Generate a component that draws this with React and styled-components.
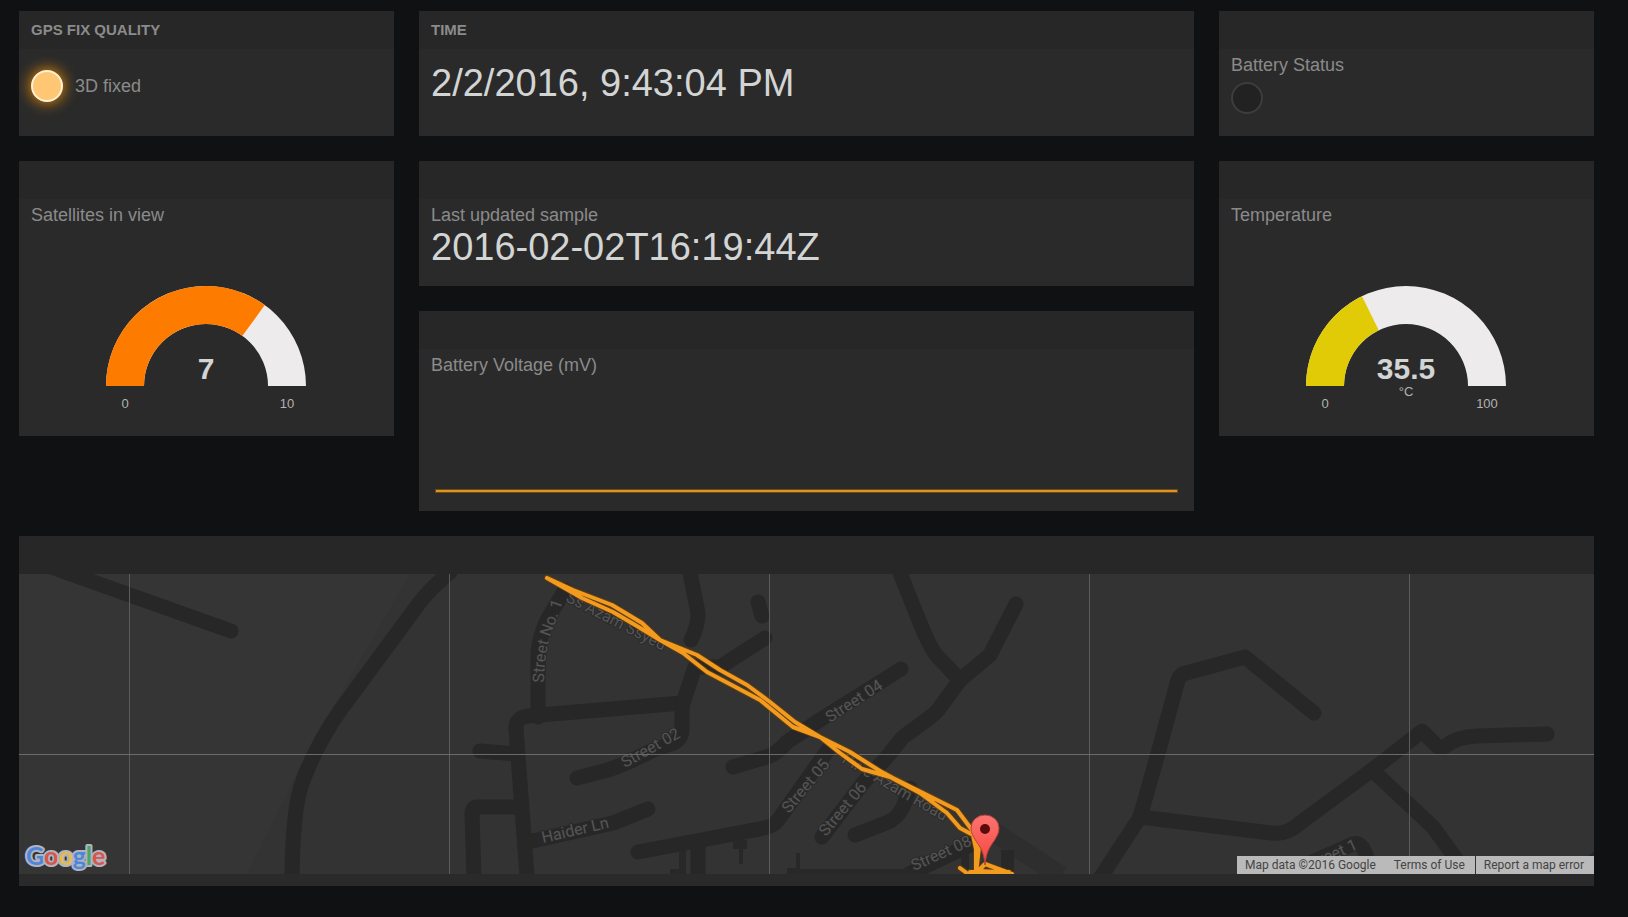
import React from "react";
import styled, { createGlobalStyle } from "styled-components";

const GlobalStyle = createGlobalStyle`
  * { box-sizing: border-box; }
  body {
    margin: 0;
    background: #101113;
    color: #8b8b8b;
    font-family: "Liberation Sans", Arial, sans-serif;
    font-size: 18px;
  }
`;

const Board = styled.main`
  display: grid;
  grid-template-columns: repeat(4, minmax(0, 1fr));
  gap: 25px;
  padding: 11px 34px 31px 19px;
`;

const Column = styled.div`
  grid-column: span ${(p) => p.$span || 1};
  display: flex;
  flex-direction: column;
  gap: 25px;
`;

const Panel = styled.section`
  display: flex;
  flex-direction: column;
  min-height: ${(p) => p.$height}px;
  background: #2a2a2a;
`;

const PanelHeader = styled.header`
  height: 38px;
  padding: 0 12px;
  background: #272727;
`;

const PanelTitle = styled.h2`
  margin: 0;
  font-size: 15px;
  line-height: 38px;
  font-weight: bold;
  text-transform: uppercase;
`;

const PanelBody = styled.div`
  flex: 1;
  display: flex;
  flex-direction: column;
  padding: ${(p) => (p.$titled ? 14 : 4)}px 12px 0;
`;

const WidgetLabel = styled.h3`
  margin: 0;
  font-size: 18px;
  line-height: 24px;
  font-weight: normal;
`;

const BigValue = styled.div`
  color: #d3d4d4;
  font-size: 38px;
  line-height: 40px;
  white-space: nowrap;
`;

const IndicatorRow = styled.div`
  display: flex;
  align-items: center;
  gap: 12px;
  height: ${(p) => (p.$tall ? 46 : 42)}px;
`;

const Light = styled.span`
  width: 32px;
  height: 32px;
  border-radius: 50%;
  border: 2px solid ${(p) => (p.$on ? "#fdf1d8" : "#3d3d3d")};
  background: ${(p) => (p.$on ? "#ffc773" : "#222")};
  box-shadow: ${(p) => (p.$on ? "0 0 15px #ff9900" : "none")};
`;

const GaugeSvg = styled.svg`
  display: block;
  align-self: center;
  width: 201px;
  height: 140px;
  margin-top: 59px;
  font-family: "Liberation Sans", Arial, sans-serif;
  text-anchor: middle;
`;

const SparkSvg = styled.svg`
  display: block;
  height: 40px;
  margin: auto 4px 0;
`;

const MapFrame = styled.div`
  position: relative;
  height: 300px;
  margin-bottom: 12px;
  overflow: hidden;
  background: #333;
`;

const MapSvg = styled.svg`
  display: block;
  width: 100%;
  height: 100%;
`;

const Attribution = styled.div`
  position: absolute;
  right: 0;
  bottom: 0;
  display: flex;
  gap: 1px;
  color: #444;
  font-family: Roboto, sans-serif;
  font-size: 12px;
  line-height: 18px;
  white-space: nowrap;
`;

const CreditGroup = styled.span`
  display: flex;
  gap: 18px;
  padding: 0 10px 0 8px;
  background: #bababa;
`;

const CreditLink = styled.a`
  padding: ${(p) => (p.$boxed ? "0 10px 0 8px" : 0)};
  background: #bababa;
  color: inherit;
  text-decoration: none;
`;

function Widget({ title, height, children }) {
  return (
    <Panel $height={height}>
      <PanelHeader>{title && <PanelTitle>{title}</PanelTitle>}</PanelHeader>
      <PanelBody $titled={Boolean(title)}>{children}</PanelBody>
    </Panel>
  );
}

function arc(from, to) {
  const point = (t, r) => {
    const a = Math.PI * (1 - t);
    return `${100 + r * Math.cos(a)} ${100 - r * Math.sin(a)}`;
  };
  return `M${point(from, 100)}A100 100 0 0 1 ${point(to, 100)}L${point(to, 62)}A62 62 0 0 0 ${point(from, 62)}Z`;
}

function Gauge({ label, value, max, unit, color }) {
  return (
    <GaugeSvg viewBox="0 0 201 140" role="img" aria-label={label}>
      <path d={arc(0, 1)} fill="#edebec" />
      <path d={arc(0, value / max)} fill={color} />
      <text x="100" y="93" fontSize="30" fontWeight="bold" fill="#d3d4d4">{value}</text>
      {unit && <text x="100" y="110" fontSize="13" fill="#b3b3b3">{unit}</text>}
      <text x="19" y="122" fontSize="13" fill="#b3b3b3">0</text>
      <text x="181" y="122" fontSize="13" fill="#b3b3b3">{max}</text>
    </GaugeSvg>
  );
}

const ROADS = [
  "M27-9L49-1L212 57",
  "M431-2Q412 14 401 28L334 119Q310 150 296 179Q284 204 281 216Q274 240 273 301",
  "M546 16L528 46Q519 66 519 83L519 143",
  "M663 129L509 142Q496 144 497 155L504 249L508 301",
  "M461 177L498 180",
  "M663 129V155Q663 166 652 170L634 176Q600 194 581 198L558 204",
  "M671-1L679 39Q679 52 672 66M664 129L676 93L701 93L746 64",
  "M739 28L743 42",
  "M882 95L804 144L768 168Q756 182 744 184L714 193",
  "M509 268L594 249L629 235",
  "M498 233H458Q453 233 453 240L455 301",
  "M619 278L745 254Q756 252 762 242L811 173",
  "M679 273V301",
  "M997 30L971 81L941 106L919 136Q915 141 884 163L868 183L844 209L803 263",
  "M881-1L901 49Q912 76 919 83L941 106",
  "M836 261L867 249Q878 245 884 233L891 214",
  "M890 300L951 271",
  "M1295 139L1226 83L1167 99Q1161 100 1159 106L1138 183L1121 243L1078 309",
  "M1121 243L1253 259Q1268 261 1281 249L1353 196L1388 169L1403 157L1418 172Q1423 175 1428 171Q1438 163 1458 162L1528 160",
  "M1353 196L1414 253L1450 303",
  "M1560 298L1590 276",
];

const TRACK_A =
  "M528 4L554 16L593 31L623 49L641 66L678 81L701 96L728 111L751 128L776 148L801 163L831 178L861 197L874 204L938 236L953 256L960 273L957 300";
const TRACK_B =
  "M528 4L563 24L594 38L618 52L641 66L664 79L688 98L741 126L774 153L801 163L821 179L843 195L871 203L901 219L928 239L941 254L954 261L957 275V300M941 294L949 300M951 298H990M952 304L966 290L993 300M966 290L960 297L980 298";

const STREETS = [
  ["Street 02", 606, 194, -29],
  ["Haider Ln", 524, 269, -13],
  ["Street 04", 811, 149, -33],
  ["Street 05", 770, 240, -50],
  ["Street 06", 807, 263, -50],
  ["Street 08", 895, 297, -24],
  ["Street 1", 1289, 297, -24],
  ["Ss Azam Ssyed", 546, 27, 27],
  ["Pir-e-Azam Road", 822, 188, 30],
];

const LOGO = [
  ["G", "#4f86d9"],
  ["o", "#d9554c"],
  ["o", "#e3ba4c"],
  ["g", "#4f86d9"],
  ["l", "#4ea56a"],
  ["e", "#d9554c"],
];

function RoadMap() {
  return (
    <MapSvg viewBox="0 0 1575 300" preserveAspectRatio="xMidYMid slice" role="img" aria-label="Map of the recorded track">
      <defs>
        <path id="street-one" d="M525 109Q525 80 533 58L545 24" />
        <linearGradient id="pin" x1="0" y1="0" x2="0" y2="1">
          <stop offset="0" stopColor="#fb7570" />
          <stop offset="1" stopColor="#f8433d" />
        </linearGradient>
      </defs>
      <path d="M0 0H391L291 173L228 300H0Z" fill="#353535" />
      <path d="M972 256L1042 302" stroke="#2e2e2e" strokeWidth="20" />
      <g fill="none" stroke="#272727" strokeWidth="15" strokeLinecap="round" strokeLinejoin="round">
        {ROADS.map((d) => <path key={d} d={d} />)}
      </g>
      <path
        d="M1284 292L1334 270Q1343 267 1348 284"
        fill="none" stroke="#272727" strokeWidth="15" strokeLinecap="round"
      />
      <path
        d="M660 276H667V300H651V295H660ZM714 266H728V275H724V290H720V275H714ZM768 295H900V300H768ZM777 279H781V296H777ZM768 294H778V290H781V300H768ZM982 276H995V300H982ZM942 276H950V300H942Z"
        fill="#282828"
      />
      <g fill="#555" stroke="#2a2a2a" strokeWidth="2" paintOrder="stroke" fontFamily="Roboto, sans-serif" fontSize="16">
        <text><textPath href="#street-one">Street No. 1</textPath></text>
        {STREETS.map(([name, x, y, angle]) => (
          <text key={name} transform={`translate(${x} ${y}) rotate(${angle})`}>{name}</text>
        ))}
      </g>
      <g fill="#5c5c5c">
        {[110, 430, 750, 1070, 1390].map((x) => <rect key={x} x={x} width="1" height="300" />)}
        <rect y="180" width="1575" height="1" fill="#6a6b6a" />
      </g>
      <g fill="none" strokeLinejoin="round" strokeLinecap="round">
        <path d={TRACK_A + TRACK_B} stroke="#6b420c" strokeOpacity="0.7" strokeWidth="6" />
        <path d={TRACK_A + TRACK_B} stroke="#f39b1e" strokeWidth="4" />
      </g>
      <path
        d="M966 291C965 279 962 274 957 267C954 262 952 259 952 254A14 13 0 0 1 980 254C980 259 978 262 975 267C970 274 967 279 966 291Z"
        fill="url(#pin)" stroke="#b5413c" strokeWidth="1"
      />
      <circle cx="966" cy="255" r="5" fill="#5c0b0b" />
    </MapSvg>
  );
}

const LogoLink = styled.a`
  position: absolute;
  left: 5px;
  bottom: 0;
`;

const LogoSvg = styled.svg`
  display: block;
  width: 88px;
  height: 34px;
`;

function GoogleLogo() {
  return (
    <LogoLink href="#google" aria-label="Google">
      <LogoSvg viewBox="0 0 88 34" fontFamily="Lato, sans-serif" fontSize="25" fontWeight="bold">
        <text x="2" y="25" stroke="#b0b4c0" strokeWidth="4" strokeLinejoin="round" paintOrder="stroke">
          {LOGO.map(([letter, color], i) => (
            <tspan key={i} fill={color}>{letter}</tspan>
          ))}
        </text>
      </LogoSvg>
    </LogoLink>
  );
}

export default function App() {
  return (
    <>
      <GlobalStyle />
      <Board>
        <Column>
          <Widget title="GPS Fix Quality" height={125}>
            <IndicatorRow $tall>
              <Light $on />
              <span>3D fixed</span>
            </IndicatorRow>
          </Widget>
          <Widget height={275}>
            <WidgetLabel>Satellites in view</WidgetLabel>
            <Gauge label="Satellites in view" value={7} max={10} color="#fd7c00" />
          </Widget>
        </Column>
        <Column $span={2}>
          <Widget title="Time" height={125}>
            <BigValue>2/2/2016, 9:43:04 PM</BigValue>
          </Widget>
          <Widget height={125}>
            <WidgetLabel>Last updated sample</WidgetLabel>
            <BigValue>2016-02-02T16:19:44Z</BigValue>
          </Widget>
          <Widget height={200}>
            <WidgetLabel>Battery Voltage (mV)</WidgetLabel>
            <SparkSvg viewBox="0 0 743 40" preserveAspectRatio="none" role="img" aria-label="Battery voltage history">
              <path d="M0 20H743" stroke="#6b4a14" strokeWidth="4" />
              <path d="M1 20H742" stroke="#dd9420" strokeWidth="2" />
            </SparkSvg>
          </Widget>
        </Column>
        <Column>
          <Widget height={125}>
            <WidgetLabel>Battery Status</WidgetLabel>
            <IndicatorRow>
              <Light />
            </IndicatorRow>
          </Widget>
          <Widget height={275}>
            <WidgetLabel>Temperature</WidgetLabel>
            <Gauge label="Temperature" value={35.5} max={100} unit="°C" color="#e0cb06" />
          </Widget>
        </Column>
        <Column $span={4}>
          <Panel $height={350}>
            <PanelHeader />
            <MapFrame>
              <RoadMap />
              <GoogleLogo />
              <Attribution>
                <CreditGroup>
                  <span>Map data ©2016 Google</span>
                  <CreditLink href="#terms">Terms of Use</CreditLink>
                </CreditGroup>
                <CreditLink $boxed href="#report">Report a map error</CreditLink>
              </Attribution>
            </MapFrame>
          </Panel>
        </Column>
      </Board>
    </>
  );
}
